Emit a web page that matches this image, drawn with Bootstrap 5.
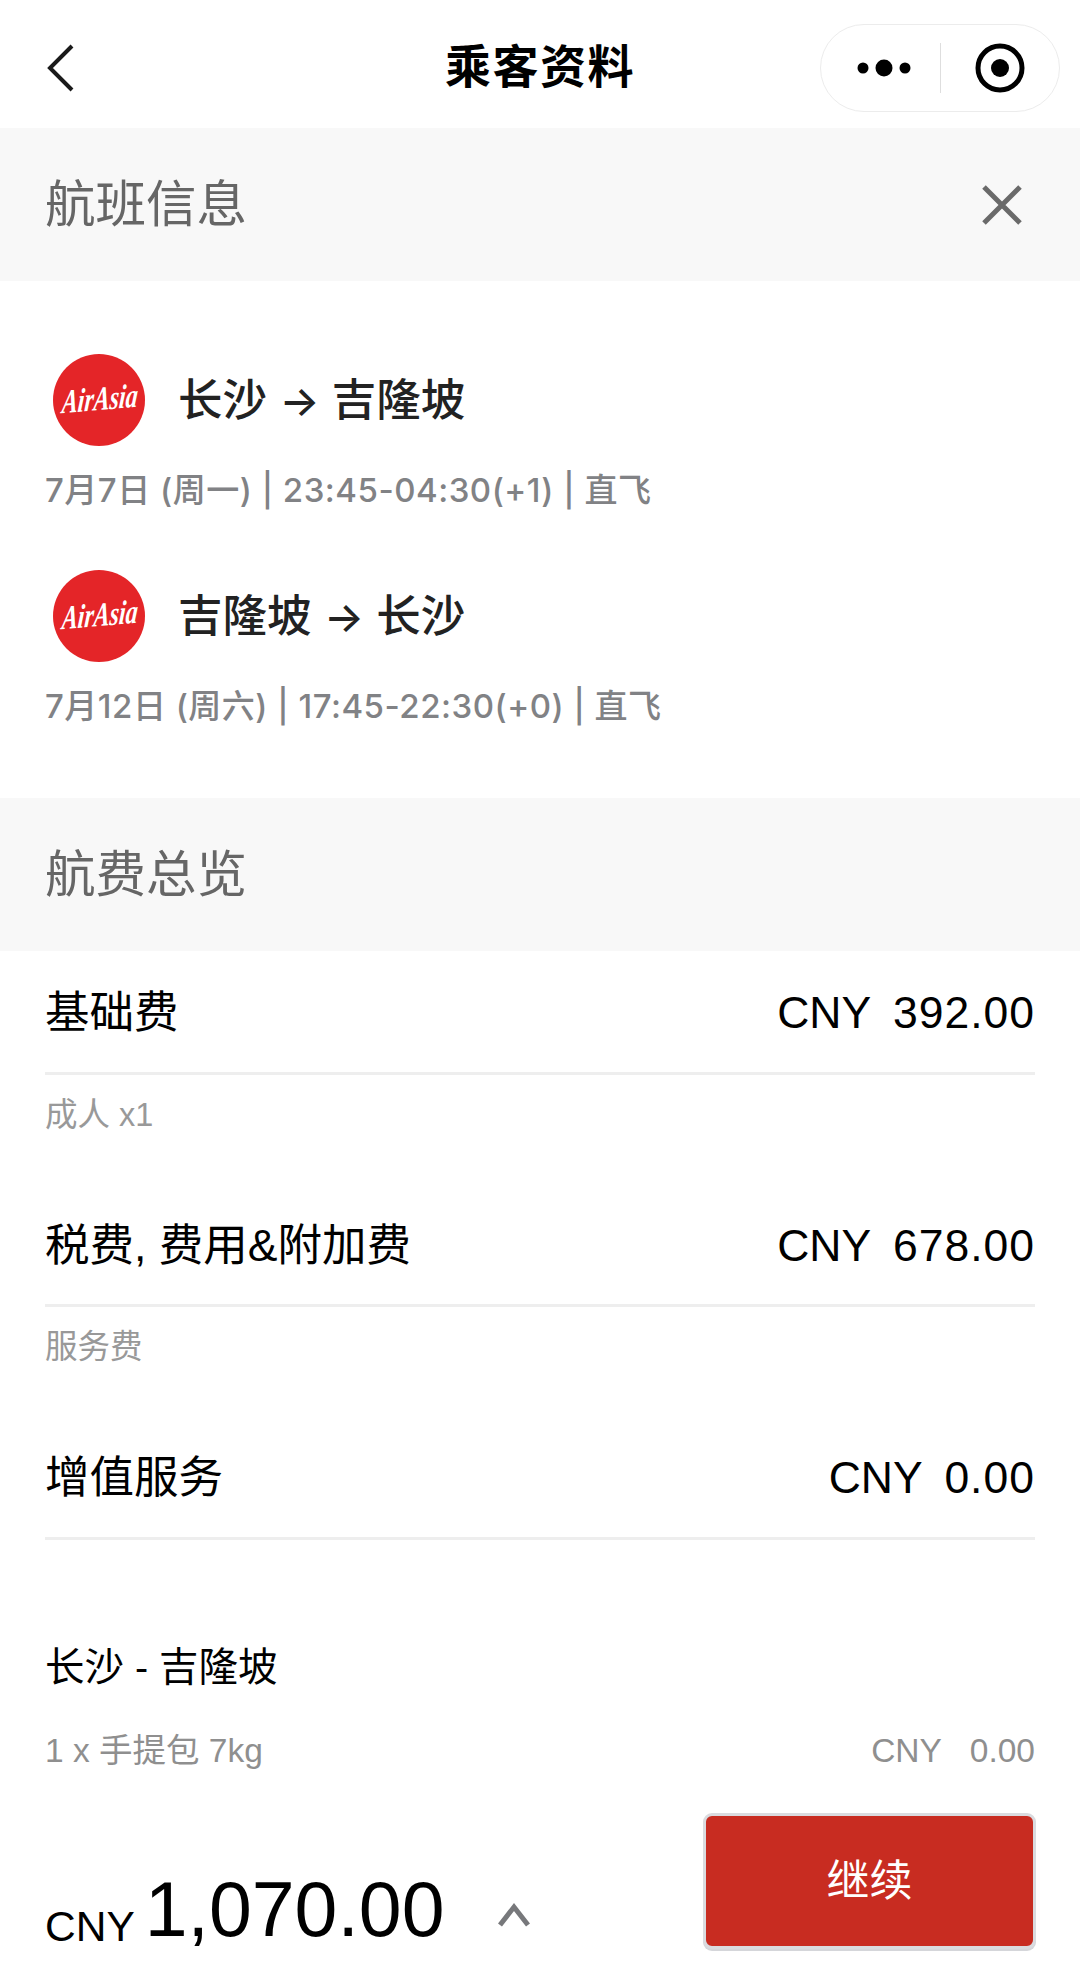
<!DOCTYPE html>
<html lang="zh-CN">
<head>
<meta charset="UTF-8" />
<meta name="viewport" content="width=device-width, initial-scale=1.0" />
<title>乘客资料</title>
<link rel="stylesheet" href="https://cdn.jsdelivr.net/npm/bootstrap@5.3.0/dist/css/bootstrap.min.css" />
<style>
   html, body { height: 1975px; }
   body {
   width: 1080px;
   overflow: hidden;
   font-family: "Liberation Sans", "Noto Sans CJK SC", sans-serif;
   color: #000;
   }
   body > * { flex-shrink: 0; }
   .top-bar {
   height: 128px;
   display: grid;
   grid-template-columns: minmax(0, 1fr) auto minmax(0, 1fr);
   align-items: center;
   padding: 8px 20px 0;
   }
   .top-back { margin-left: 27px; }
   .top-title { font-size: 46px; font-weight: 700; margin: 0; letter-spacing: 1.5px; }
   .capsule {
   width: 240px;
   height: 88px;
   border: 1px solid #ececec;
   border-radius: 44px;
   justify-self: end;
   }
   .capsule-cell { width: 119px; }
   .capsule-dots { padding-left: 7px; }
   .capsule-sep { width: 1px; height: 50px; background: #dedede; }
   .band {
   height: 153px;
   padding: 0 56px 0 45px;
   background: #f8f8f8;
   color: #666;
   font-size: 50.5px;
   }
   .flights { height: 517px; padding: 72px 0 0 45px; }
   .flight-head { height: 94px; gap: 32px; padding-left: 7px; }
   .flight-route { font-size: 44.5px; color: #222; font-weight: 500; padding-top: 3px; }
   .route-arrow { font-family: "Inter", sans-serif; font-size: 42px; }
   .flight-time {
   font-family: "Inter", "Noto Sans CJK SC", sans-serif;
   font-size: 33px;
   letter-spacing: .5px;
   color: #818285;
   font-weight: 500;
   margin-top: 22px;
   height: 42px;
   line-height: 42px;
   white-space: nowrap;
   }
   .second-flight { margin-top: 58px; }
   .fees { padding: 0 45px; }
   .fee-row {
   height: 123.5px;
   padding-top: 5px;
   font-size: 44.5px;
   border-bottom: 3px solid #eee;
   }
   .fee-amount { word-spacing: -1.5px; white-space: nowrap; }
   .fee-num { letter-spacing: 1px; }
   .fee-note { height: 80px; font-size: 32.5px; color: #999; line-height: 80px; margin-bottom: 29px; }
   .fee-gap { height: 102px; }
   .trip-name { font-size: 39.5px; line-height: 50px; }
   .trip-item { font-size: 33.5px; color: #8f8f8f; margin-top: 37px; line-height: 44px; }
   .bottom-bar {
   margin-top: auto;
   padding: 0 44px 26px 45px;
   }
   .total { line-height: 1; padding-bottom: 1px; }
   .total-amount { gap: 10px; }
   .total-cur { font-size: 42.5px; }
   .total-num { font-size: 77px; }
   .total-arrow { margin: 10px 0 0 53px; }
   .go-btn {
   width: 333px;
   height: 136px;
   background: #c82c21;
   color: #fff;
   font-size: 43px;
   border: 3px solid #dadbdf;
   border-radius: 9px;
   box-shadow: 0 2px 0 #d5d6da;
   }
</style>
</head>
<body class="d-flex flex-column">
   <div class="top-bar">
      <svg class="top-back" width="28" height="48" viewBox="0 0 28 48" fill="none" stroke="#1a1a1a" stroke-width="4"><path d="M25 2 3 24l22 22" /></svg>
      <h1 class="top-title">乘客资料</h1>
      <div class="capsule d-flex align-items-center">
         <div class="capsule-cell capsule-dots d-flex justify-content-center">
            <svg width="54" height="20" viewBox="0 0 54 20" fill="#000"><circle cx="6" cy="10" r="5.5" /><circle cx="27" cy="10" r="8.5" /><circle cx="48" cy="10" r="5.5" /></svg>
         </div>
         <div class="capsule-sep"></div>
         <div class="capsule-cell d-flex justify-content-center">
            <svg width="50" height="50" viewBox="0 0 50 50"><circle cx="25" cy="25" r="22" fill="none" stroke="#000" stroke-width="5" /><circle cx="25" cy="25" r="9" fill="#000" /></svg>
         </div>
      </div>
   </div>

   <div class="band d-flex align-items-center justify-content-between">
      <span>航班信息</span>
      <svg width="44" height="44" viewBox="0 0 44 44" stroke="#6a6a6a" stroke-width="5"><path d="M4 4l36 36M40 4 4 40" /></svg>
   </div>

   <div class="flights">
      <div class="flight-head d-flex align-items-center">
         <svg width="94" height="94" viewBox="0 0 94 94">
            <circle cx="47" cy="47" r="46" fill="#e42528" />
            <text transform="translate(47 57) rotate(-5) skewX(-10) scale(1 1.4)" text-anchor="middle" fill="#fff" font-family="Liberation Serif" font-style="italic" font-weight="700" font-size="24">AirAsia</text>
         </svg>
         <span class="flight-route">长沙 <span class="route-arrow">→</span> 吉隆坡</span>
      </div>
      <div class="flight-time">7月7日 (周一) | 23:45-04:30(+1) | 直飞</div>
      <div class="flight-head second-flight d-flex align-items-center">
         <svg width="94" height="94" viewBox="0 0 94 94">
            <circle cx="47" cy="47" r="46" fill="#e42528" />
            <text transform="translate(47 57) rotate(-5) skewX(-10) scale(1 1.4)" text-anchor="middle" fill="#fff" font-family="Liberation Serif" font-style="italic" font-weight="700" font-size="24">AirAsia</text>
         </svg>
         <span class="flight-route">吉隆坡 <span class="route-arrow">→</span> 长沙</span>
      </div>
      <div class="flight-time">7月12日 (周六) | 17:45-22:30(+0) | 直飞</div>
   </div>

   <div class="band d-flex align-items-center">航费总览</div>

   <div class="fees">
      <div class="fee-row d-flex align-items-center justify-content-between">
         <span>基础费</span><span class="fee-amount">CNY&nbsp; <span class="fee-num">392.00</span></span>
      </div>
      <div class="fee-note">成人 x1</div>
      <div class="fee-row d-flex align-items-center justify-content-between">
         <span>税费, 费用&amp;附加费</span><span class="fee-amount">CNY&nbsp; <span class="fee-num">678.00</span></span>
      </div>
      <div class="fee-note">服务费</div>
      <div class="fee-row d-flex align-items-center justify-content-between">
         <span>增值服务</span><span class="fee-amount">CNY&nbsp; <span class="fee-num">0.00</span></span>
      </div>
      <div class="fee-gap"></div>
      <div class="trip-name">长沙 - 吉隆坡</div>
      <div class="trip-item d-flex justify-content-between">
         <span>1 x 手提包 7kg</span><span>CNY&nbsp;&nbsp; 0.00</span>
      </div>
   </div>

   <div class="bottom-bar d-flex align-items-end justify-content-between">
      <div class="total d-flex align-items-center">
         <div class="total-amount d-flex align-items-end">
            <span class="total-cur">CNY</span><span class="total-num">1,070.00</span>
         </div>
         <svg class="total-arrow" width="34" height="26" viewBox="0 0 34 26" fill="none" stroke="#77787b" stroke-width="5"><path d="M3 23 17 5l14 18" /></svg>
      </div>
      <button type="button" class="btn go-btn">继续</button>
   </div>
   <script src="https://cdn.jsdelivr.net/npm/bootstrap@5.3.0/dist/js/bootstrap.bundle.min.js"></script>
</body>
</html>
